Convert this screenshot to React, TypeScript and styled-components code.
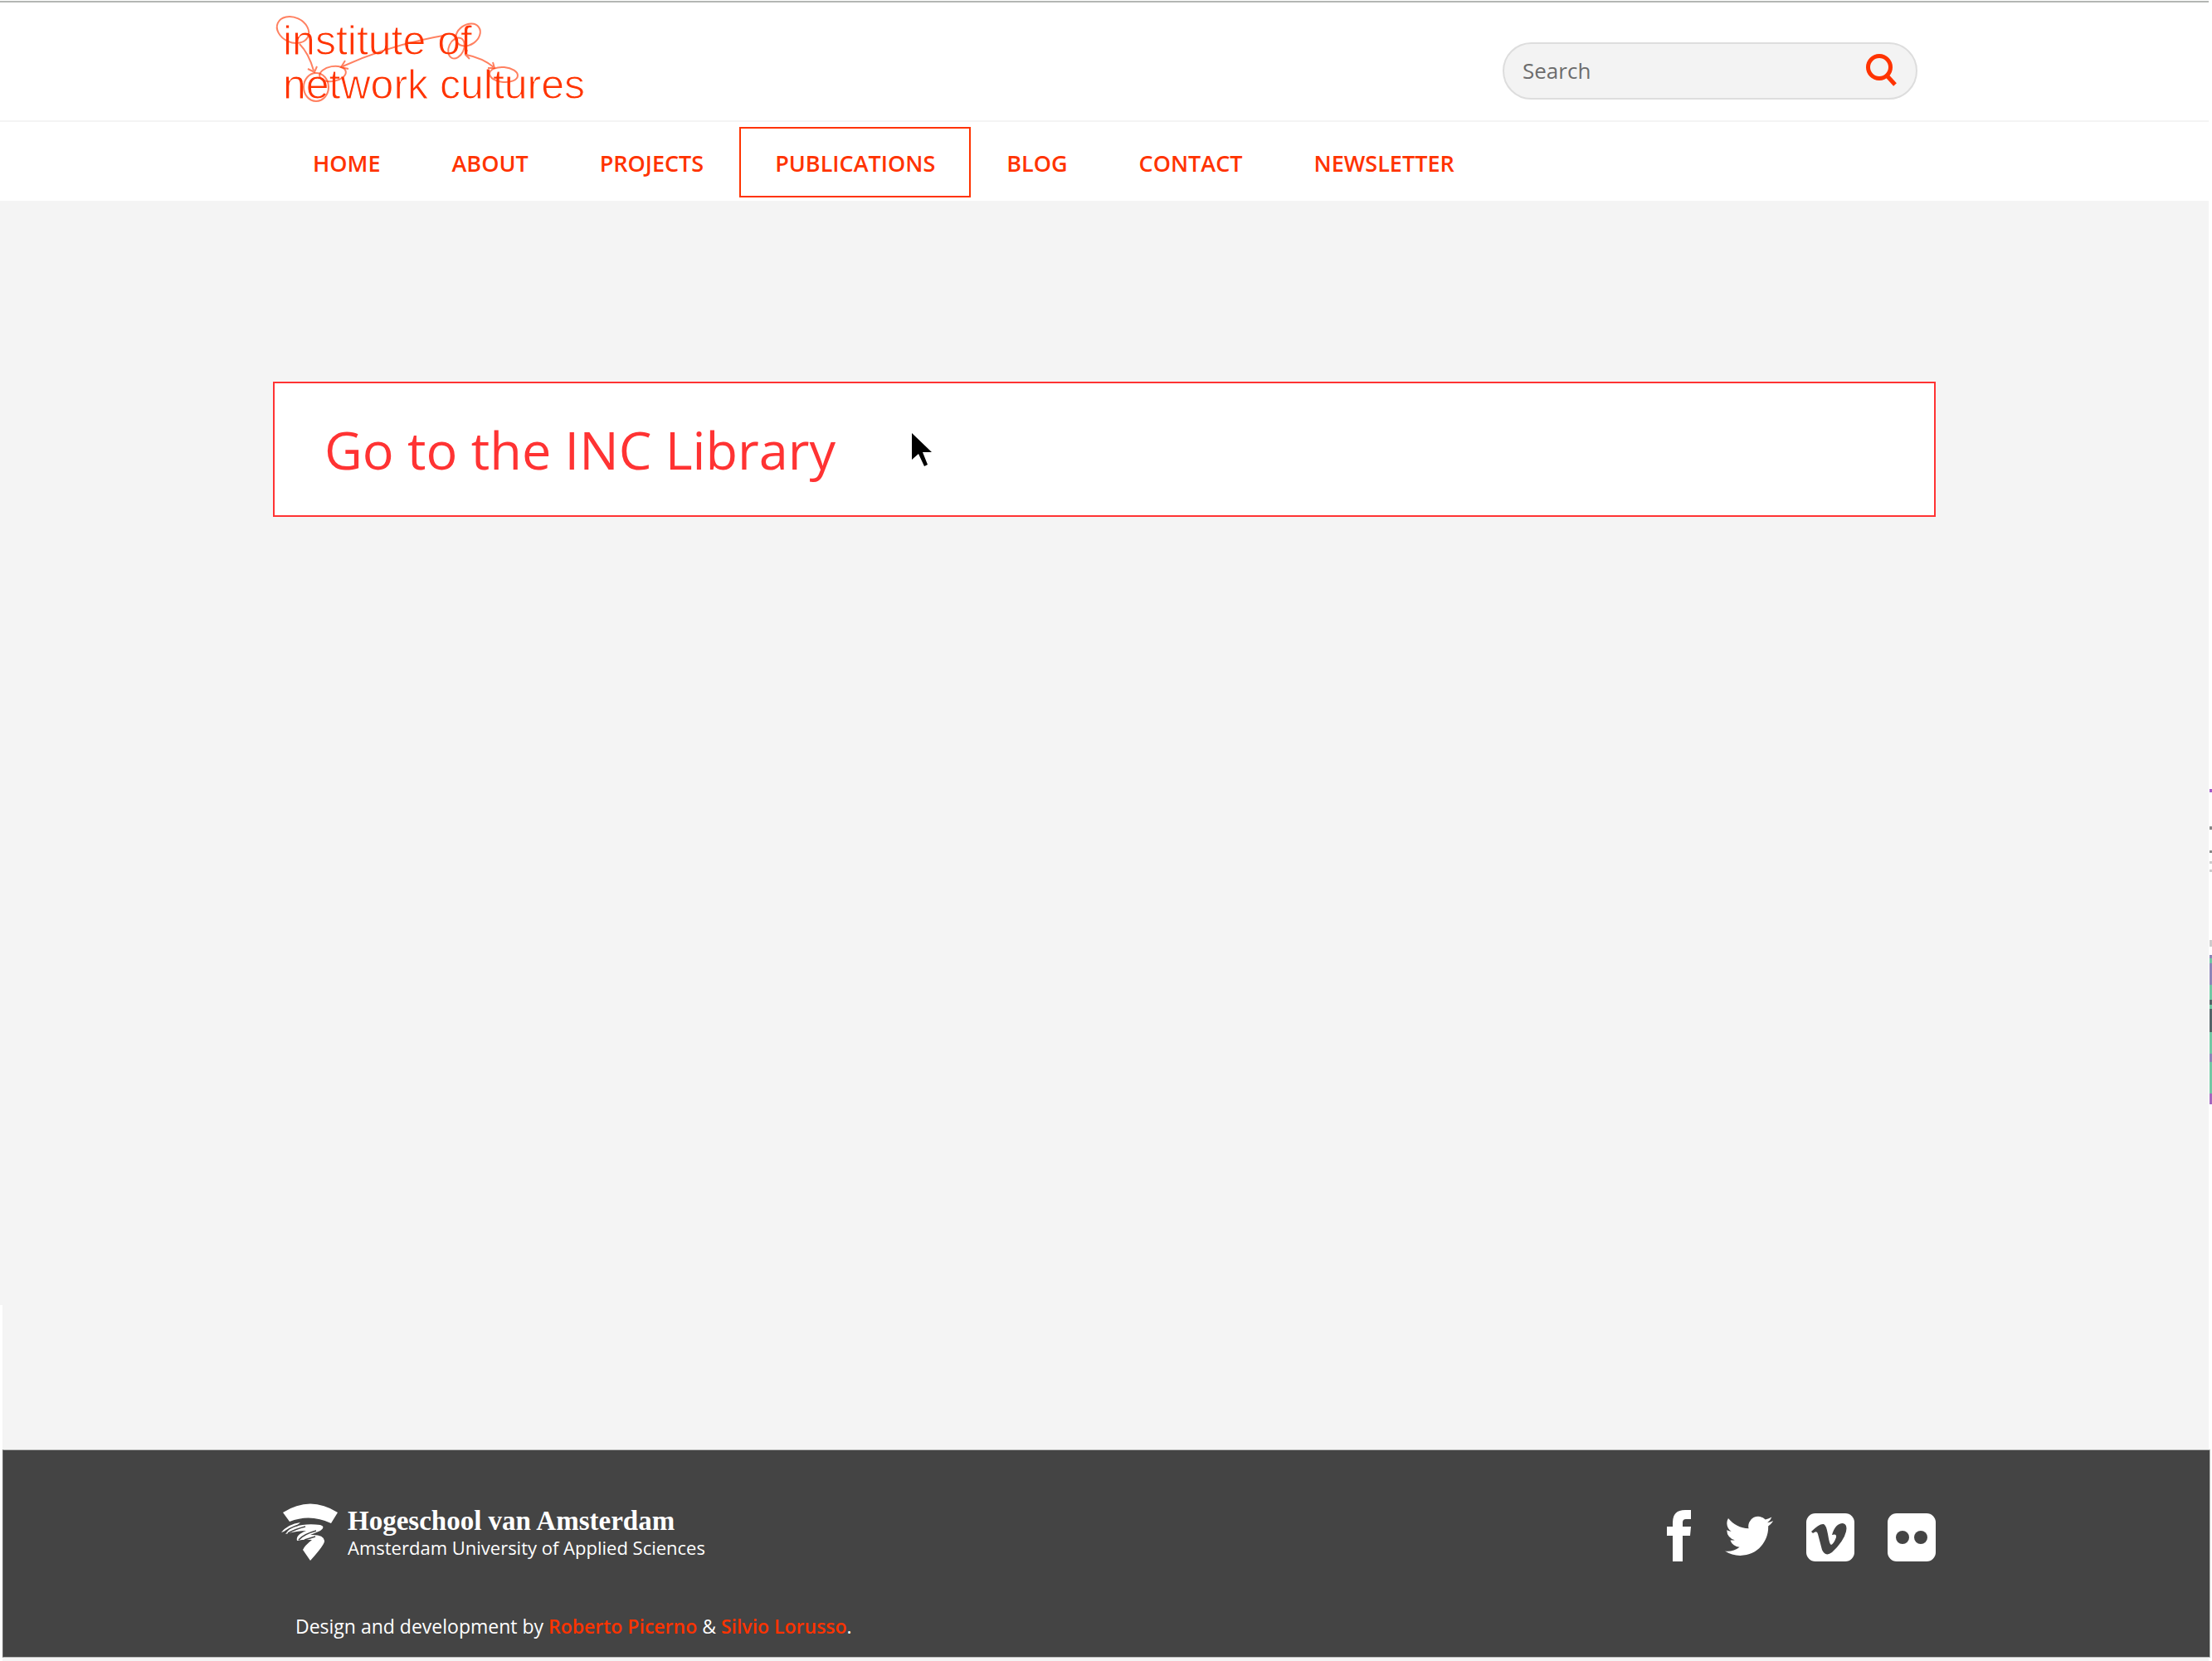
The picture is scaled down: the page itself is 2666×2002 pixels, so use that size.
import React from 'react';
import styled, { createGlobalStyle } from 'styled-components';

const accent = '#ff3300';
const sans = "'Open Sans', 'Noto Sans', sans-serif";

const GlobalStyle = createGlobalStyle`
  *, *::before, *::after { box-sizing: border-box; }
  body {
    margin: 0;
    background: #fff;
    color: #fff;
    font-family: ${sans};
  }
  a { text-decoration: none; }
`;

const Page = styled.div`
  position: relative;
  display: flex;
  flex-direction: column;
  min-height: 100vh;
  padding: 1px 4px 0 0;
`;

const Container = styled.div`
  width: 100%;
  max-width: 2004px;
  margin: 0 auto;
`;

const Header = styled.header`
  border-top: 2px solid #b4b6b4;
  background: #fff;
`;

const Branding = styled(Container)`
  display: flex;
  align-items: center;
  justify-content: space-between;
  height: 142px;
  padding-right: 22px;
`;

const LogoLink = styled.a`
  position: relative;
  display: block;
  padding: 4px 0 0 12px;
  color: ${accent};
  font: 400 50px/53px 'Liberation Sans', Arial, sans-serif;
`;

const LogoLine = styled.span`
  display: block;
  white-space: nowrap;
  -webkit-text-stroke: 1px #fff;
`;

const LogoScribble = styled.svg`
  position: absolute;
  left: 0;
  top: 0;
  width: 392px;
  height: 120px;
  overflow: visible;
`;

const SearchForm = styled.form`
  display: flex;
  align-items: center;
  width: 500px;
  height: 69px;
  margin-top: 22px;
  padding: 0 20px 0 22px;
  border: 2px solid #dddddd;
  border-radius: 35px;
  background: #f3f3f3;
`;

const SearchInput = styled.input`
  flex: 1;
  min-width: 0;
  padding: 0;
  border: 0;
  outline: 0;
  background: transparent;
  color: #666;
  font: 400 26px/40px ${sans};
  &::placeholder { color: #6c6c6c; opacity: 1; }
`;

const SearchButton = styled.button`
  display: flex;
  width: 42px;
  height: 42px;
  padding: 0;
  border: 0;
  background: none;
  svg { width: 42px; height: 42px; }
`;

const NavBar = styled.nav`
  border-top: 2px solid #f4f4f4;
`;

const NavList = styled.ul`
  display: flex;
  max-width: 2004px;
  margin: 0 auto;
  padding: 6px 0 4px 5px;
  list-style: none;
`;

const NavLink = styled.a<{ $active?: boolean }>`
  display: block;
  height: 85px;
  padding: 0 41px;
  border: 2px solid ${(p) => (p.$active ? accent : 'transparent')};
  color: ${accent};
  font-size: 27px;
  font-weight: 600;
  line-height: 84px;
`;

const Main = styled.main`
  flex: 1;
  padding-top: 218px;
  background: #f4f4f4;
`;

const LibraryLink = styled.a`
  display: flex;
  align-items: center;
  gap: 92px;
  height: 163px;
  padding: 0 60px;
  border: 2px solid #ff3333;
  background: #fff;
  color: #ff3333;
  font-size: 63px;
  line-height: 88px;
`;

const Pointer = styled.svg`
  width: 24px;
  height: 40px;
`;

const Bottom = styled.div`
  margin-left: 3px;
  padding: 174px 0 4px;
  background: #f4f4f4;
`;

const Footer = styled.footer`
  margin-right: -2px;
  padding: 63px 5px 19px 0;
  border: 1px solid #b8bab8;
  border-left-color: #666;
  background: #444;
`;

const FooterRow = styled.div`
  display: flex;
  align-items: flex-start;
  justify-content: space-between;
`;

const School = styled.a`
  display: flex;
  align-items: flex-start;
  gap: 11px;
  padding-left: 9px;
  color: #fff;
`;

const SchoolMark = styled.svg`
  width: 70px;
  height: 70px;
`;

const SchoolName = styled.strong`
  display: block;
  padding-top: 4px;
  font: 700 33px/36px 'Liberation Serif', 'Times New Roman', serif;
`;

const SchoolSub = styled.span`
  display: block;
  font: 400 22px/28px ${sans};
`;

const Social = styled.div`
  display: flex;
  align-items: flex-end;
  gap: 40px;
  padding-top: 9px;
  a { display: flex; color: #fff; }
  svg { display: block; height: 62px; fill: currentColor; }
`;

const Credits = styled.p`
  margin: 60px 0 0;
  padding-left: 27px;
  font-size: 23px;
  line-height: 36px;
  a { color: ${accent}; font-weight: 600; }
`;

const EdgeSliver = styled.svg`
  position: absolute;
  right: 0;
  top: 950px;
  width: 4px;
  height: 382px;
`;

const navItems = ['HOME', 'ABOUT', 'PROJECTS', 'PUBLICATIONS', 'BLOG', 'CONTACT', 'NEWSLETTER'];

const Scribble = () => (
  <LogoScribble viewBox="329 19 392 120" fill="none" stroke="#ff3300" strokeOpacity="0.62" strokeWidth="2" aria-hidden="true">
    <ellipse cx="353" cy="36" rx="20" ry="15" transform="rotate(25 353 36)" />
    <ellipse cx="564" cy="42" rx="16" ry="12" transform="rotate(-35 564 42)" />
    <ellipse cx="550" cy="58" rx="9" ry="13" transform="rotate(25 550 58)" />
    <ellipse cx="381" cy="105" rx="15" ry="17" />
    <ellipse cx="401" cy="89" rx="16" ry="9" transform="rotate(-10 401 89)" />
    <ellipse cx="607" cy="90" rx="17" ry="9" transform="rotate(5 607 90)" />
    <path d="M361 53 Q372 64 378 85 M371 83 L379 87 L382 80" />
    <path d="M534 43 Q470 54 413 80 M416 73 L411 81 L420 83" />
    <path d="M562 66 Q582 70 595 81 M563 60 L561 66 L566 71 M588 82 L596 82 L594 75" />
  </LogoScribble>
);

export default function App() {
  return (
    <>
      <GlobalStyle />
      <Page>
        <Header>
          <Branding>
            <LogoLink href="#home">
              <LogoLine>institute of</LogoLine>
              <LogoLine>network cultures</LogoLine>
              <Scribble />
            </LogoLink>
            <SearchForm role="search" onSubmit={(e) => e.preventDefault()}>
              <SearchInput type="text" placeholder="Search" aria-label="Search" />
              <SearchButton type="submit" aria-label="Submit search">
                <svg viewBox="0 0 42 42" fill="none" stroke={accent} strokeWidth="5">
                  <circle cx="18" cy="17" r="13.5" />
                  <path d="M27 27 L37 38" />
                </svg>
              </SearchButton>
            </SearchForm>
          </Branding>
          <NavBar>
            <NavList>
              {navItems.map((item) => (
                <li key={item}>
                  <NavLink href={`#${item.toLowerCase()}`} $active={item === 'PUBLICATIONS'}>{item}</NavLink>
                </li>
              ))}
            </NavList>
          </NavBar>
        </Header>

        <Main>
          <Container>
            <LibraryLink href="#library">
              Go to the INC Library
              <Pointer viewBox="0 0 24 40" aria-hidden="true">
                <path d="M0 0 V32 L8 25 L15 40 L19 38 L13 23 H24 Z" fill="#000" />
              </Pointer>
            </LibraryLink>
          </Container>
        </Main>

        <Bottom>
          <Footer>
            <Container>
              <FooterRow>
                <School href="#hva">
                  <SchoolMark viewBox="0 0 70 70" fill="#fff" aria-hidden="true">
                    <path d="M3 12 Q36 -9 69 12 L61 25 Q36 13 11 23 Z" />
                    <path d="M1 36 Q9 26 24 24 Q22 26 18 29 Q30 25 48 27 Q55 29 48 34 L36 39 Q52 38 53 46 Q54 50 36 70 L27 57 Q29 52 38 45 Q29 44 20 46 Q18 39 31 34 Q20 34 6 38 L10 33 Z" />
                    <path d="M2 38 Q9 31 22 27 M9 37 Q18 32 30 29 M22 45 Q28 38 43 34 M29 45 L42 41" fill="none" stroke="#444" strokeWidth="1.5" />
                  </SchoolMark>
                  <span>
                    <SchoolName>Hogeschool van Amsterdam</SchoolName>
                    <SchoolSub>Amsterdam University of Applied Sciences</SchoolSub>
                  </span>
                </School>
                <Social>
                  <a href="#facebook" aria-label="Facebook">
                    <svg viewBox="0 0 30 62" width="30">
                      <path d="M7 62 V31 H0 V20 H7 V15 Q7 0 22 0 H29 V11 H23 Q19 11 19 15 V20 H29 L28 31 H19 V62 Z" />
                    </svg>
                  </a>
                  <a href="#twitter" aria-label="Twitter">
                    <svg viewBox="0 -7 58 62" width="58">
                      <path transform="scale(2.42) translate(0 -1.95)" d="M23.95 4.57a10 10 0 0 1-2.82.77 4.96 4.96 0 0 0 2.16-2.72c-.95.55-2 .95-3.13 1.18a4.92 4.92 0 0 0-8.38 4.48C7.69 8.1 4.07 6.13 1.64 3.16a4.82 4.82 0 0 0-.67 2.48c0 1.71.87 3.21 2.19 4.1a4.9 4.9 0 0 1-2.23-.62v.06a4.92 4.92 0 0 0 3.95 4.83 5 5 0 0 1-2.21.08 4.94 4.94 0 0 0 4.6 3.42A9.87 9.87 0 0 1 0 19.54a13.99 13.99 0 0 0 7.56 2.21c9.05 0 14-7.5 14-13.98 0-.21 0-.42-.02-.63a9.94 9.94 0 0 0 2.46-2.55z" />
                    </svg>
                  </a>
                  <a href="#vimeo" aria-label="Vimeo">
                    <svg viewBox="0 -4 58 62" width="58">
                      <rect width="58" height="58" rx="11" />
                      <path fill="#444" d="M6 22 Q16 12 21 13 Q24 14 26 25 Q28 38 30 38 Q33 37 36 29 Q37 24 31 26 Q35 12 44 12 Q50 13 48 22 Q45 34 31 47 Q23 53 19 44 L14 25 Q13 20 8 24 Z" />
                    </svg>
                  </a>
                  <a href="#flickr" aria-label="Flickr">
                    <svg viewBox="0 -4 58 62" width="58">
                      <rect width="58" height="58" rx="11" />
                      <circle cx="18" cy="29" r="8" fill="#444" />
                      <circle cx="40" cy="29" r="8" fill="#444" />
                    </svg>
                  </a>
                </Social>
              </FooterRow>
              <Credits>
                Design and development by <a href="#picerno">Roberto Picerno</a> &amp; <a href="#lorusso">Silvio Lorusso</a>.
              </Credits>
            </Container>
          </Footer>
        </Bottom>

        <EdgeSliver viewBox="0 0 4 382" aria-hidden="true">
          <path d="M1 1h3v4h-3z" fill="#a45cc8" />
          <path d="M1 46h3v4h-3zM1 75h3v3h-3z" fill="#888" />
          <path d="M1 88h3v3h-3zM1 98h3v3h-3zM1 183h3v8h-3z" fill="#ccc" />
          <path d="M1 201h3v180h-3z" fill="#72c8a4" />
          <path d="M1 201h3v4h-3zM1 211h3v26h-3zM1 320h3v10h-3z" fill="#8c86b8" />
          <path d="M1 255h3v6h-3zM1 266h3v28h-3z" fill="#546468" />
          <path d="M1 368h3v13h-3z" fill="#a468c0" />
        </EdgeSliver>
      </Page>
    </>
  );
}
